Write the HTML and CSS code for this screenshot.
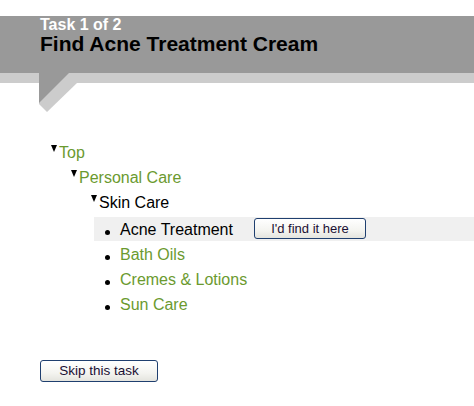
FILE: index.html
```html
<!DOCTYPE html>
<html>
<head>
<meta charset="utf-8">
<link rel="stylesheet" href="styles.css">
</head>
<body>
<div class="page">
  <div class="header">
    <div class="task-count">Task 1 of 2</div>
    <div class="task-title">Find Acne Treatment Cream</div>
  </div>
  <svg class="tail" width="474" height="40" viewBox="0 0 474 40">
    <rect x="0" y="0" width="474" height="10" fill="#cccccc"/>
    <polygon points="39,10 77,10 47,39 39,31" fill="#cccccc"/>
    <polygon points="39,0 69,0 39,30" fill="#999999"/>
  </svg>
  <div class="tree">
    <div class="node">
      <div class="row"><span class="tri"></span><span class="label link">Top</span></div>
      <div class="children">
        <div class="node">
          <div class="row"><span class="tri"></span><span class="label link">Personal Care</span></div>
          <div class="children">
            <div class="node">
              <div class="row"><span class="tri"></span><span class="label">Skin Care</span></div>
              <ul class="leaves">
                <li class="leaf selected"><span class="leaf-text">Acne Treatment</span><button class="btn find-btn">I'd find it here</button></li>
                <li class="leaf"><span class="leaf-text link">Bath Oils</span></li>
                <li class="leaf"><span class="leaf-text link">Cremes &amp; Lotions</span></li>
                <li class="leaf"><span class="leaf-text link">Sun Care</span></li>
              </ul>
            </div>
          </div>
        </div>
      </div>
    </div>
  </div>
  <div class="skip">
    <button class="btn skip-btn">Skip this task</button>
  </div>
</div>
</body>
</html>
```

FILE: styles.css
```css
html, body {
  margin: 0;
  padding: 0;
  background: #ffffff;
}

body {
  font-family: "Liberation Sans", Arial, sans-serif;
  color: #000;
}

.page {
  padding-top: 16px;
}

.header {
  background: #999999;
  height: 57px;
  box-sizing: border-box;
  padding-left: 40px;
  padding-top: 2px;
}

.task-count {
  color: #ffffff;
  font-weight: bold;
  font-size: 16px;
  line-height: 14px;
}

.task-title {
  color: #000;
  font-weight: bold;
  font-size: 21px;
  line-height: 21px;
  margin-top: 1px;
}

.tail {
  display: block;
}

.tree {
  margin-top: 27px;
  padding-left: 51px;
  font-size: 16px;
}

.row {
  display: flex;
  align-items: flex-start;
  line-height: 25px;
  height: 25px;
}

.tri {
  width: 0;
  height: 0;
  border-left: 3.5px solid transparent;
  border-right: 3.5px solid transparent;
  border-top: 7px solid #000;
  margin-top: 5px;
  margin-right: 2px;
}

.link {
  color: #6b9a2f;
}

.children {
  padding-left: 20px;
}

.leaves {
  list-style: none;
  margin: 2px 0 0 3px;
  padding: 0;
}

.leaf {
  padding-left: 11px;
  line-height: 25px;
  height: 25px;
  white-space: nowrap;
}

.leaf::before {
  content: "";
  display: inline-block;
  width: 5px;
  height: 5px;
  border-radius: 50%;
  background: #000;
  margin-right: 10px;
  vertical-align: baseline;
}

.leaf.selected {
  background: #f0f0f0;
  height: 24px;
  box-sizing: border-box;
  padding-top: 1px;
  line-height: 23px;
  margin-bottom: 1px;
}

.btn {
  font-family: "Liberation Sans", Arial, sans-serif;
  font-size: 13px;
  color: #1a0f33;
  background: linear-gradient(#ffffff, #f4f4f0 60%, #e4e4de);
  border: 1px solid #1f3f6f;
  border-radius: 3px;
  padding: 0;
  box-sizing: border-box;
  cursor: pointer;
}

.find-btn {
  width: 112px;
  height: 21px;
  line-height: 19px;
  margin-left: 21px;
  vertical-align: top;
}

.skip {
  margin-top: 43px;
  padding-left: 40px;
}

.skip-btn {
  width: 118px;
  height: 22px;
  line-height: 20px;
  font-size: 13.5px;
}
```
